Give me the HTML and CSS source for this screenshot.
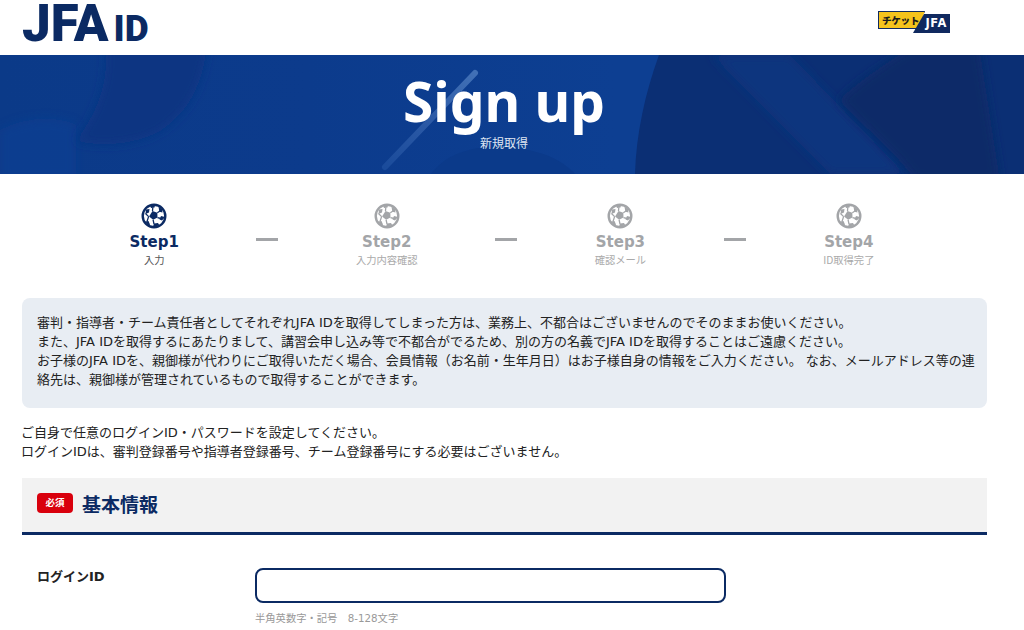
FILE: index.html
```html
<!DOCTYPE html>
<html lang="ja">
<head>
<meta charset="utf-8">
<title>Sign up</title>
<link rel="stylesheet" href="styles.css">
</head>
<body>
<header class="site-header">
  <div class="logo"><span class="logo-jfa">JFA</span><span class="logo-id">ID</span></div>
  <div class="ticket"><span class="ticket-a">チケット</span><span class="ticket-b">JFA</span></div>
</header>
<section class="hero">
  <svg class="hero-bg" viewBox="0 0 1024 119" preserveAspectRatio="none" aria-hidden="true">
    <defs>
      <linearGradient id="hb" x1="0" x2="1" y1="0" y2="0">
        <stop offset="0" stop-color="#0b3a88"/>
        <stop offset="0.3" stop-color="#0c3b8c"/>
        <stop offset="0.6" stop-color="#0d3f92"/>
      </linearGradient>
      <linearGradient id="hs" gradientUnits="userSpaceOnUse" x1="475" y1="18" x2="383" y2="112">
        <stop offset="0" stop-color="#4170b6"/>
        <stop offset="0.5" stop-color="#2c5aa6"/>
        <stop offset="1" stop-color="#1a4b9b"/>
      </linearGradient>
      <filter id="soft" x="-10%" y="-20%" width="120%" height="140%"><feGaussianBlur stdDeviation="5"/></filter>
    </defs>
    <rect width="1024" height="119" fill="url(#hb)"/>
    <path d="M0 75C30 60 60 62 76 70V125H0Z" fill="#0c4194" opacity=".6" filter="url(#soft)"/>
    <path d="M105 -10H207C203 30 188 58 160 76C135 90 100 92 76 86C95 60 110 30 105 -10Z" fill="#0b3582" filter="url(#soft)"/>
    <path d="M431 119C446 98 475 90 505 92C535 94 560 102 575 119Z" fill="#0b3a8a"/>
    <path d="M659 0C645 38 636 80 635 119H1024V0Z" fill="#0b2f74"/>
    <path d="M712 0H790L905 119H830Z" fill="#0c347e" filter="url(#soft)"/>
    <path d="M839 45C860 25 890 5 915 -10H979L1000 125H915C890 90 860 70 839 45Z" fill="#0a2a68" filter="url(#soft)"/>
    <line x1="475" y1="18" x2="385" y2="112" stroke="url(#hs)" stroke-width="6" stroke-linecap="round"/>
  </svg>
  <h1 class="hero-title">Sign up</h1>
  <p class="hero-sub">新規取得</p>
</section>
<ol class="steps">
  <li class="step is-active">
    <svg class="ball" viewBox="0 0 26 26" aria-hidden="true"><use href="#ball"/></svg>
    <span class="step-name">Step1</span><span class="step-label">入力</span>
  </li>
  <li class="dash"></li>
  <li class="step">
    <svg class="ball" viewBox="0 0 26 26" aria-hidden="true"><use href="#ball"/></svg>
    <span class="step-name">Step2</span><span class="step-label">入力内容確認</span>
  </li>
  <li class="dash"></li>
  <li class="step">
    <svg class="ball" viewBox="0 0 26 26" aria-hidden="true"><use href="#ball"/></svg>
    <span class="step-name">Step3</span><span class="step-label">確認メール</span>
  </li>
  <li class="dash"></li>
  <li class="step">
    <svg class="ball" viewBox="0 0 26 26" aria-hidden="true"><use href="#ball"/></svg>
    <span class="step-name">Step4</span><span class="step-label">ID取得完了</span>
  </li>
</ol>
<svg class="defs" aria-hidden="true">
  <symbol id="ball" viewBox="0 0 26 26">
    <circle cx="13" cy="13" r="11.300" fill="none" stroke="currentColor" stroke-width="2.400"/>
    <path d="M11.500 8l4.800 1.800.2 4.800-4.400 2.200-4-3.200Z" fill="currentColor"/>
    <path d="M5 6.500l3.500-.5-.5 3.500-3.500 1.500ZM9 2.500l5 0 -.5 2-3.500.5ZM17.500 3.500l3.500 2.500.5 3.500-3.200-.8ZM24 14l-3 3.500-2.500-1 1.500-3.500ZM4 18.500l3.500-.5 1.500 3.500-1 1.500ZM12 23.500l1-3 4 -.5 1.500 2.500Z" fill="currentColor"/>
    <path d="M11.500 8L11.800 4.500M16.300 9.800L19 8M7.600 13.600L4.500 10.500M12.100 16.800L13 21M16.500 14.600L20 15.500M7.600 13.600L6 18.500" stroke="currentColor" stroke-width="1.300" fill="none"/>
  </symbol>
</svg>
<main class="content">
  <div class="notice">
    <p>審判・指導者・チーム責任者としてそれぞれJFA IDを取得してしまった方は、業務上、不都合はございませんのでそのままお使いください。</p>
    <p>また、JFA IDを取得するにあたりまして、講習会申し込み等で不都合がでるため、別の方の名義でJFA IDを取得することはご遠慮ください。</p>
    <p>お子様のJFA IDを、親御様が代わりにご取得いただく場合、会員情報（お名前・生年月日）はお子様自身の情報をご入力ください。 なお、メールアドレス等の連絡先は、親御様が管理されているもので取得することができます。</p>
  </div>
  <p class="intro">ご自身で任意のログインID・パスワードを設定してください。<br>ログインIDは、審判登録番号や指導者登録番号、チーム登録番号にする必要はございません。</p>
  <div class="section-head"><span class="badge">必須</span><h2>基本情報</h2></div>
  <div class="form-row">
    <label class="form-label" for="login">ログインID</label>
    <div class="form-field">
      <input class="text-input" id="login" type="text">
      <p class="hint">半角英数字・記号　8-128文字</p>
    </div>
  </div>
</main>
</body>
</html>
```
FILE: styles.css
```css
* { box-sizing: border-box; }
html, body { margin: 0; padding: 0; background: #fff; overflow: hidden; height: 630px; }
body { font-family: "DejaVu Sans", "Noto Sans CJK JP", sans-serif; color: #222; }
p, h1, h2, ol { margin: 0; padding: 0; }

.site-header { height: 55px; display: flex; justify-content: space-between; align-items: flex-start; padding: 0 74px 0 22px; }
.logo { display: flex; align-items: baseline; color: #0b2a63; font-family: "Roboto", "Liberation Sans", sans-serif; font-weight: 900; line-height: 48px; }
.logo-jfa { font-size: 51px; }
.logo-id { font-size: 37px; margin-left: 5px; }
.ticket { display: flex; align-items: flex-start; margin-top: 11px; height: 24px; font-family: "Noto Sans CJK JP", sans-serif; font-weight: 900; }
.ticket-a { width: 47px; height: 18px; background: #f5c31c; box-shadow: inset 0 0 0 1px #10295f; color: #1b1b1b; font-size: 9.500px; line-height: 18px; padding-left: 4px; white-space: nowrap; letter-spacing: -.2px; clip-path: polygon(0 0, 100% 0, 85% 100%, 0 100%); }
.ticket-b { width: 37px; height: 19px; margin: 3px 0 0 -12px; background: #10295f; color: #fff; font-family: "DejaVu Sans", sans-serif; font-size: 11.500px; font-weight: 700; line-height: 19px; text-align: right; padding-right: 3px; letter-spacing: .6px; clip-path: polygon(11px 0, 100% 0, 100% 100%, 0 100%); }

.hero { position: relative; height: 119px; padding-right: 16px; background: #0b3c8e; color: #fff; text-align: center; overflow: hidden; }
.hero-bg { position: absolute; inset: 0; width: 100%; height: 100%; }
.hero-title { position: relative; font-family: "Noto Sans", sans-serif; font-size: 55px; font-weight: 700; line-height: 64px; padding-top: 14px; box-sizing: content-box; }
.hero-sub { position: relative; font-family: "Noto Sans CJK JP", sans-serif; font-size: 12px; line-height: 18px; margin-top: 1px; color: #dfe6f2; }

.steps { list-style: none; display: flex; justify-content: center; gap: 77.500px; align-items: flex-start; padding: 29px 20px 0 0; height: 124px; }
.step { display: flex; flex-direction: column; align-items: center; color: #a3a5a8; }
.step.is-active { color: #0b2a63; }
.ball { width: 26px; height: 26px; display: block; }
.defs { position: absolute; width: 0; height: 0; }
.step-name { font-size: 15px; font-weight: 700; line-height: 20px; margin-top: 3px; }
.step-label { font-family: "Noto Sans CJK JP", sans-serif; font-size: 10.300px; line-height: 14px; margin-top: 1px; color: #aaa; white-space: nowrap; }
.is-active .step-label { color: #555; }
.dash { width: 22px; height: 3px; background: #a3a5a8; margin-top: 35px; }

.content { padding: 0 37px 0 22px; font-family: "DejaVu Sans", "Noto Sans CJK JP", sans-serif; }
.notice { background: #e8edf3; border-radius: 8px; padding: 15px 10px 11px 15px; font-size: 13px; line-height: 19px; height: 110px; color: #222; }
.intro { font-size: 13px; line-height: 19px; margin: 15px 0 0 -1px; }
.section-head { display: flex; align-items: center; height: 57px; margin-top: 17px; padding: 0 0 4px 15px; background: #f2f2f2; border-bottom: 3px solid #0b2a63; }
.section-head h2 { font-size: 19px; font-weight: 700; color: #0b2a63; margin: 0 0 0 9px; }
.badge { width: 36px; height: 20px; border-radius: 4px; background: #d9000d; color: #fff; font-size: 9.500px; font-weight: 700; line-height: 20px; text-align: center; }
.form-row { display: flex; padding: 33px 0 0 15px; }
.form-label { width: 218px; margin-top: 1px; font-size: 13px; font-weight: 700; line-height: 16px; color: #222; }
.form-field { flex: none; }
.text-input { display: block; width: 471px; height: 35px; border: 2px solid #0b2a63; border-radius: 8px; background: #fff; outline: none; }
.hint { font-size: 10.300px; line-height: 14px; color: #999; margin-top: 8px; }
```
